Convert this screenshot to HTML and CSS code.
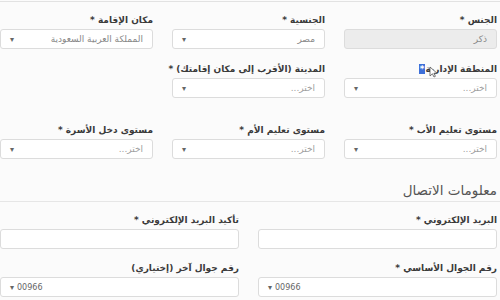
FILE: index.html
```html
<!DOCTYPE html>
<html lang="ar" dir="rtl">
<head>
  <meta charset="UTF-8" />
  <title>بيانات الطالب</title>
  <link rel="stylesheet" href="styles.css">
</head>
<body>
  <div class="top-edge"></div>
  <div class="page">
    <div class="row">
      <div class="field">
        <label>الجنس *</label>
        <div class="control disabled"><span class="value">ذكر</span></div>
      </div>
      <div class="field">
        <label>الجنسية *</label>
        <div class="control select"><span class="value">مصر</span><span class="arrow">▾</span></div>
      </div>
      <div class="field">
        <label>مكان الإقامة *</label>
        <div class="control select"><span class="value">المملكة العربية السعودية</span><span class="arrow">▾</span></div>
      </div>
    </div>

    <div class="row">
      <div class="field">
        <label>المنطقة الإدارية<span class="caret">*</span></label>
        <div class="control select"><span class="value placeholder">اختر...</span><span class="arrow">▾</span></div>
      </div>
      <div class="field">
        <label>المدينة (الأقرب إلى مكان إقامتك) *</label>
        <div class="control select"><span class="value placeholder">اختر...</span><span class="arrow">▾</span></div>
      </div>
    </div>

    <div class="row row-spaced">
      <div class="field">
        <label>مستوى تعليم الأب *</label>
        <div class="control select"><span class="value placeholder">اختر...</span><span class="arrow">▾</span></div>
      </div>
      <div class="field">
        <label>مستوى تعليم الأم *</label>
        <div class="control select"><span class="value placeholder">اختر...</span><span class="arrow">▾</span></div>
      </div>
      <div class="field">
        <label>مستوى دخل الأسرة *</label>
        <div class="control select"><span class="value placeholder">اختر...</span><span class="arrow">▾</span></div>
      </div>
    </div>

    <h2 class="section-title">معلومات الاتصال</h2>

    <div class="row row-wide">
      <div class="field">
        <label>البريد الإلكتروني *</label>
        <div class="control"></div>
      </div>
      <div class="field">
        <label>تأكيد البريد الإلكتروني *</label>
        <div class="control"></div>
      </div>
    </div>

    <div class="row row-wide">
      <div class="field">
        <label>رقم الجوال الأساسي *</label>
        <div class="control phone"><span class="arrow">▾</span><span class="code">00966</span></div>
      </div>
      <div class="field">
        <label>رقم جوال آخر (إختياري)</label>
        <div class="control phone"><span class="arrow">▾</span><span class="code">00966</span></div>
      </div>
    </div>
  </div>

  <svg class="pointer" width="9" height="12" viewBox="0 0 9 12">
    <path d="M1 1 L1 10 L3.4 7.8 L5 11 L6.4 10.3 L4.9 7.2 L8 7.2 Z" fill="#fff" stroke="#555" stroke-width="0.8"/>
  </svg>
</body>
</html>
```

FILE: styles.css
```css
body {
  margin: 0;
  background: #fbfbfb;
  font-family: 'DejaVu Sans', 'Noto Sans', sans-serif;
  color: #333;
  width: 500px;
  height: 300px;
  overflow: hidden;
  position: relative;
}
.top-edge {
  height: 1px;
  border-bottom: 1px solid #e2e2e2;
}
.page {
  padding: 11px 3px 0 0;
}
.row {
  display: grid;
  grid-template-columns: repeat(3, 153px);
  column-gap: 19px;
  margin-bottom: 13px;
}
.row-spaced {
  margin-top: 25px;
}
.row-wide {
  grid-template-columns: repeat(2, 239px);
  margin-bottom: 12px;
}
.field {
  display: flex;
  flex-direction: column;
}
label {
  font-size: 9px;
  font-weight: 700;
  line-height: 14px;
  height: 14px;
  margin-bottom: 2px;
  color: #3a3a3a;
  white-space: nowrap;
}
.caret {
  background: #3d6fd8;
  color: #fff;
  padding: 0 1px;
}
.control {
  height: 20px;
  box-sizing: border-box;
  border: 1px solid #dcdcdc;
  border-radius: 3px;
  background: #fff;
  display: flex;
  align-items: center;
  padding: 0 9px;
  font-size: 9px;
  color: #777;
}
.control.disabled {
  background: #ececec;
}
.select {
  justify-content: space-between;
}
.value {
  color: #888;
}
.placeholder {
  color: #a0a0a0;
}
.arrow {
  font-size: 8px;
  color: #666;
}
.phone {
  direction: ltr;
  gap: 3px;
}
.code {
  font-size: 8px;
  color: #666;
}
.section-title {
  margin: 21px -3px 11px 0;
  padding: 0 3px 1px 0;
  font-size: 13.5px;
  line-height: 20px;
  font-weight: 400;
  color: #555;
  border-bottom: 1px solid #e6e6e6;
}
.pointer {
  position: absolute;
  left: 429px;
  top: 66px;
}
```
